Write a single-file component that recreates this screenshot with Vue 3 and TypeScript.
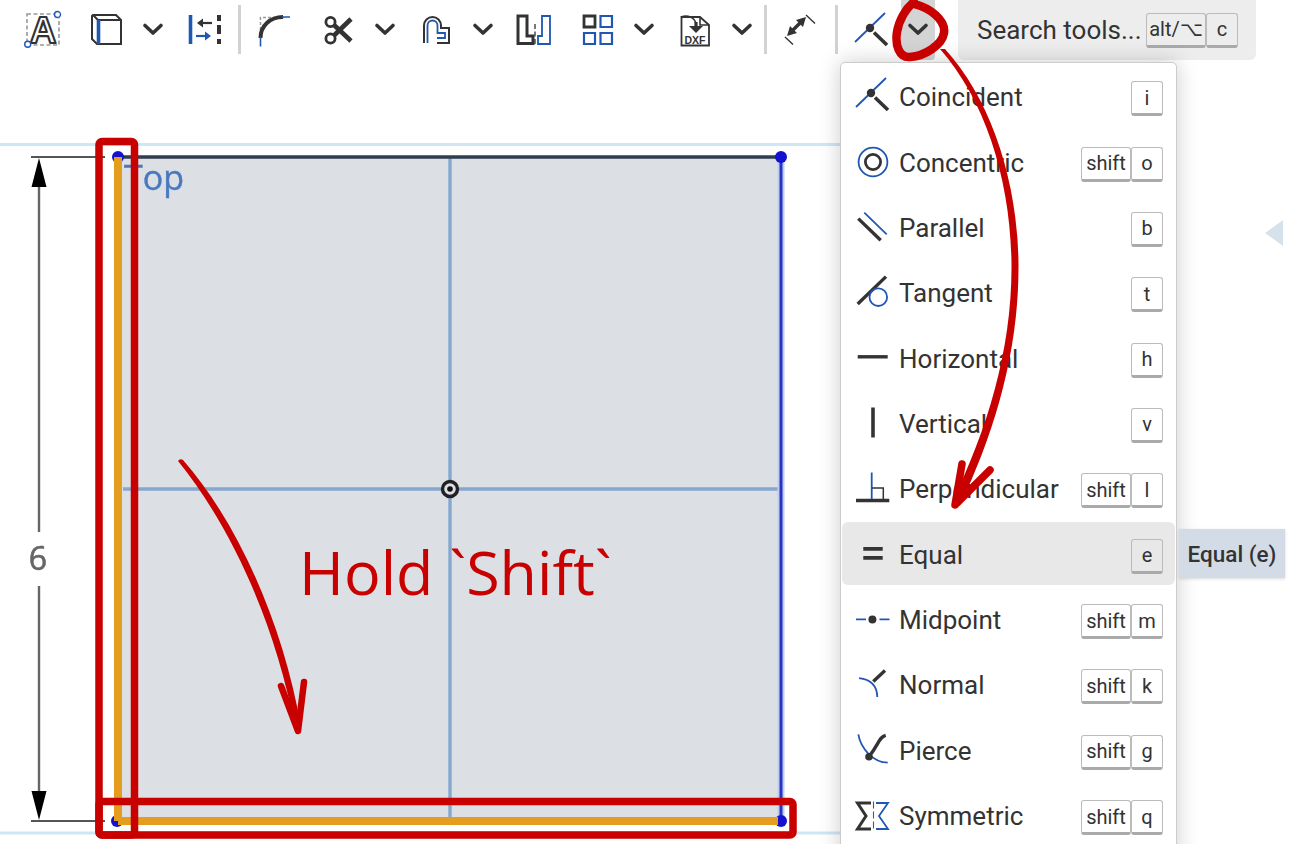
<script setup lang="ts">
// Sketch toolbar with the constraint menu opened over the canvas

interface Shape {
  d?: string
  c?: string
  w?: number
  fill?: string
  dash?: string
  text?: string
  x?: number
  y?: number
  size?: number
}

interface Tool {
  kind: 'icon' | 'chev' | 'sep'
  width?: number
  gap?: number
  active?: boolean
  box?: string
  shapes?: Shape[]
}

interface MenuItem {
  label: string
  keys: string[]
  hover?: boolean
  shapes: Shape[]
}

const DARK = '#333'
const BLUE = '#1f57b3'

const ring = (cx: number, cy: number, r: number) =>
  `M${cx - r} ${cy}a${r} ${r} 0 1 0 ${r * 2} 0a${r} ${r} 0 1 0 ${-r * 2} 0z`

const coincident = (ox: number, oy: number): Shape[] => [
  { d: `M${ox - 17} ${oy + 11}L${ox + 13} ${oy - 18}`, c: BLUE, w: 1.8 },
  { d: `M${ox + 2} ${oy + 1.5}L${ox + 15} ${oy + 14}`, c: DARK, w: 3.6 },
  { d: ring(ox - 2, oy - 3, 4.2), fill: DARK }
]

const tools: Tool[] = [
  {
    kind: 'icon', width: 64, box: '19 6 48 48',
    shapes: [
      { d: 'M27 14H59V45H27z', c: '#999', w: 1.6, dash: '4 2.5' },
      { text: 'A', x: 43, y: 42.5, size: 37, c: DARK, w: 2.2, fill: '#fff' },
      { d: ring(57.5, 14.5, 3), c: BLUE, w: 1.4, fill: '#fff' },
      { d: ring(27.7, 44.3, 3), c: BLUE, w: 1.4, fill: '#fff' }
    ]
  },
  {
    kind: 'icon', width: 64, box: '83 6 48 48',
    shapes: [
      { d: 'M93 15H116L121 20V44H97L92 39V16z', c: DARK, w: 2 },
      { d: 'M98 20H121M93 15L98 20', c: DARK, w: 2 },
      { d: 'M98.5 20V44', c: BLUE, w: 3.6 }
    ]
  },
  { kind: 'chev', width: 28 },
  {
    kind: 'icon', width: 68, gap: 3, box: '180 6 48 48',
    shapes: [
      { d: 'M190.5 15V44', c: BLUE, w: 3.6 },
      { d: 'M200 23H212', c: DARK, w: 2.2 },
      { d: 'M197 23l6-4.5v9z', fill: DARK },
      { d: 'M196 36H208', c: BLUE, w: 2.2 },
      { d: 'M211 36l-6-4.5v9z', fill: BLUE },
      { d: 'M217 15h4v6h-4zM217 25h4v9h-4zM217 39h4v5h-4z', fill: DARK }
    ]
  },
  { kind: 'sep' },
  {
    kind: 'icon', width: 68, box: '251 6 48 48',
    shapes: [
      { d: 'M260.5 30V17.5H284', c: '#999', w: 1.5, dash: '3 2' },
      { d: 'M260.5 38C260.5 26 270 17 283 17', c: DARK, w: 4 },
      { d: 'M260.5 37V46.5M282 17H290', c: BLUE, w: 1.6 }
    ]
  },
  {
    kind: 'icon', width: 58, box: '314 6 48 48',
    shapes: [
      { d: ring(330.5, 22, 4.6), c: DARK, w: 2.8 },
      { d: ring(330.5, 38.5, 4.6), c: DARK, w: 2.8 },
      { d: 'M334 25L351 41', c: DARK, w: 4.6 },
      { d: 'M334 35.5L351 19', c: DARK, w: 4.6 }
    ]
  },
  { kind: 'chev', width: 36 },
  {
    kind: 'icon', width: 64, box: '411 6 48 48',
    shapes: [
      { d: 'M424 43V25.5a8.5 8.5 0 0 1 17 0V28H449V43H437', c: DARK, w: 2 },
      { d: 'M427.5 43V25.5a5 5 0 0 1 10 0V33H445V38H437', c: BLUE, w: 1.8 }
    ]
  },
  { kind: 'chev', width: 32 },
  {
    kind: 'icon', width: 70, box: '510 6 48 48',
    shapes: [
      { d: 'M518 16H527V36H533V43.5H518z', c: DARK, w: 3 },
      { d: 'M550 16H542V36H538V44H550z', c: BLUE, w: 1.8 },
      { d: 'M535 24V44', c: DARK, w: 1.3, dash: '5 2.5' }
    ]
  },
  {
    kind: 'icon', width: 56, box: '573 6 48 48',
    shapes: [
      { d: 'M584 16H595V27H584z', c: DARK, w: 2.8 },
      { d: 'M600.5 16H612V27H600.5zM584 33H595V44H584zM600.5 33H612V44H600.5z', c: BLUE, w: 2.2 }
    ]
  },
  { kind: 'chev', width: 38 },
  {
    kind: 'icon', width: 62, box: '670 6 48 48',
    shapes: [
      { d: 'M681.5 17H700L709 25V45.5H681.5z', c: DARK, w: 1.8 },
      { d: 'M700 17V25H709', c: DARK, w: 1.6 },
      { d: 'M681 17C688 14 695 18 696 24', c: DARK, w: 1.6, fill: 'none' },
      { d: 'M696 22V27', c: DARK, w: 3.2 },
      { d: 'M689 26H703L696 33z', fill: DARK },
      { text: 'DXF', x: 695, y: 43.5, size: 10.5, fill: DARK }
    ]
  },
  { kind: 'chev', width: 34 },
  { kind: 'sep', gap: 5 },
  {
    kind: 'icon', width: 66, box: '776 6 48 48',
    shapes: [
      { d: 'M791 32L802 21', c: DARK, w: 3.4 },
      { d: 'M787 36l3-10 7 7zM806 17l-10 3 7 7z', fill: DARK },
      { d: 'M785 37L793 44.5M806 15L815 23.5', c: DARK, w: 1.4 }
    ]
  },
  { kind: 'sep', gap: 2 },
  { kind: 'icon', width: 63, box: '846 6 48 48', shapes: coincident(872, 31) },
  { kind: 'chev', width: 34, active: true }
]

const menu: MenuItem[] = [
  { label: 'Coincident', keys: ['i'], shapes: coincident(0, -1) },
  {
    label: 'Concentric', keys: ['shift', 'o'],
    shapes: [
      { d: ring(0, 0, 14.4), c: BLUE, w: 1.8 },
      { d: ring(0, 0, 7.6), c: DARK, w: 2.8 }
    ]
  },
  {
    label: 'Parallel', keys: ['b'],
    shapes: [
      { d: 'M-14.7 -8.4L7.7 13.3', c: DARK, w: 3.4 },
      { d: 'M-8.7 -14.4L13.7 7.3', c: BLUE, w: 1.8 }
    ]
  },
  {
    label: 'Tangent', keys: ['t'],
    shapes: [
      { d: 'M-15.3 11L13 -16.4', c: DARK, w: 3.4 },
      { d: ring(5.3, 4.2, 8.8), c: BLUE, w: 1.8 }
    ]
  },
  { label: 'Horizontal', keys: ['h'], shapes: [{ d: 'M-15.3 -1.2H14.7', c: DARK, w: 3.4 }] },
  { label: 'Vertical', keys: ['v'], shapes: [{ d: 'M0 -15.5V14.5', c: DARK, w: 3.6 }] },
  {
    label: 'Perpendicular', keys: ['shift', 'l'],
    shapes: [
      { d: 'M-17 11.5H16.3', c: DARK, w: 3.4 },
      { d: 'M-1.3 -16.5V10', c: BLUE, w: 1.8 },
      { d: 'M-1.3 -0.9H10.3V10', c: DARK, w: 1.5 }
    ]
  },
  {
    label: 'Equal', keys: ['e'], hover: true,
    shapes: [{ d: 'M-9.7 -5.2H9.7M-9.7 3.8H9.7', c: DARK, w: 3.8 }]
  },
  {
    label: 'Midpoint', keys: ['shift', 'm'],
    shapes: [
      { d: 'M-17 -0.6H-7M6.5 -0.6H16.5', c: BLUE, w: 1.8 },
      { d: ring(-0.6, -0.6, 4), fill: DARK }
    ]
  },
  {
    label: 'Normal', keys: ['shift', 'k'],
    shapes: [
      { d: 'M12 -14.5L0.3 -3.5', c: DARK, w: 3.4 },
      { d: 'M-14 -6.9Q4 -5 4.3 12.1', c: BLUE, w: 1.8 }
    ]
  },
  {
    label: 'Pierce', keys: ['shift', 'g'],
    shapes: [
      { d: 'M-14.7 -15.6C-12 -1 0 12 14.7 12.7', c: BLUE, w: 1.8 },
      { d: 'M12.7 -14.6C6 -13 6 -6 -3.7 6.1', c: DARK, w: 3.4 },
      { d: ring(-4, 6.7, 3.8), fill: DARK }
    ]
  },
  {
    label: 'Symmetric', keys: ['shift', 'q'],
    shapes: [
      { d: 'M-2 -13H-15.5L-7 0L-15.5 13H-2', c: DARK, w: 3 },
      { d: 'M3 -13H15L6 0L15 13H3', c: BLUE, w: 1.8 },
      { d: 'M0.5 -14.5V14.5', c: '#555', w: 1.1, dash: '7 3' }
    ]
  }
]
</script>

<template>
  <div class="page">
    <!-- sketch canvas -->
    <svg class="layer" width="1291" height="844" viewBox="0 0 1291 844">
      <g class="soft">
        <path d="M0 144.5H840M0 833H840" stroke="#cfe6f5" stroke-width="3" fill="none" />
        <rect x="118" y="157" width="663" height="664" fill="#dcdfe4" />
        <path d="M450 157V821M123 489H781" stroke="#86a8d0" stroke-width="3.4" fill="none" />
        <path d="M118 157H781" stroke="#2e3d50" stroke-width="3.4" fill="none" />
        <path d="M781 157V821" stroke="#c3cdf0" stroke-width="7" fill="none" />
        <path d="M781 157V821" stroke="#2436c4" stroke-width="3" fill="none" />
        <circle cx="118" cy="157" r="6" fill="#1212d0" />
        <circle cx="781" cy="157" r="6" fill="#1212d0" />
        <circle cx="781" cy="821" r="6" fill="#1212d0" />
        <circle cx="117" cy="821" r="6" fill="#1212d0" />
        <path d="M118 157V821M118 821H778" stroke="#e59d1f" stroke-width="8" fill="none" />
        <circle cx="450" cy="489" r="7.5" fill="#dcdfe4" stroke="#222" stroke-width="3.4" />
        <circle cx="450" cy="489" r="2.8" fill="#111" />
        <path d="M31 157H105M31 821H105" stroke="#555" stroke-width="2" fill="none" />
        <path d="M39 187V532M39 586V792" stroke="#666" stroke-width="2.4" fill="none" />
        <path d="M39 158L46.5 187H31.5zM39 820L46.5 791H31.5z" fill="#000" />
        <text x="38" y="570" class="dim-text">6</text>
        <text x="124" y="190" class="top-text">Top</text>
      </g>
      <path d="M1283 220V246L1265 233z" fill="#d5e2ec" />
    </svg>

    <!-- toolbar -->
    <div class="toolbar">
      <template v-for="(tool, i) in tools" :key="i">
        <div v-if="tool.kind === 'sep'" class="sep" :style="{ marginLeft: `${tool.gap ?? 0}px` }"></div>
        <div
          v-else-if="tool.kind === 'chev'"
          :class="['chev', { active: tool.active }]"
          :style="{ width: `${tool.width}px` }"
        >
          <svg width="24" height="16" viewBox="0 0 24 16">
            <path d="M4 3.5l8 7.5 8-7.5" fill="none" stroke="#333" stroke-width="3.6" stroke-linecap="round" stroke-linejoin="round" />
          </svg>
        </div>
        <div v-else class="tool" :style="{ width: `${tool.width}px`, marginLeft: `${tool.gap ?? 0}px` }">
          <svg width="48" height="48" :viewBox="tool.box">
            <template v-for="(s, j) in tool.shapes" :key="j">
              <text
                v-if="s.text"
                :x="s.x"
                :y="s.y"
                :font-size="s.size"
                :fill="s.fill"
                :stroke="s.c"
                :stroke-width="s.w"
                class="icon-text"
              >{{ s.text }}</text>
              <path
                v-else
                :d="s.d"
                :fill="s.fill ?? 'none'"
                :stroke="s.c ?? 'none'"
                :stroke-width="s.w"
                :stroke-dasharray="s.dash"
              />
            </template>
          </svg>
        </div>
      </template>

      <div class="search">
        <span class="search-label">Search tools...</span>
        <span class="keys">
          <kbd class="key key-alt">alt/⌥</kbd>
          <kbd class="key key-c">c</kbd>
        </span>
      </div>
    </div>

    <!-- constraint menu -->
    <div class="menu">
      <div v-for="item in menu" :key="item.label" :class="['row', { hover: item.hover }]">
        <svg class="row-icon" width="48" height="48" viewBox="-24 -23 48 48">
          <path
            v-for="(s, j) in item.shapes"
            :key="j"
            :d="s.d"
            :fill="s.fill ?? 'none'"
            :stroke="s.c ?? 'none'"
            :stroke-width="s.w"
            :stroke-dasharray="s.dash"
          />
        </svg>
        <span class="row-label">{{ item.label }}</span>
        <span class="keys row-keys">
          <kbd v-for="k in item.keys" :key="k" :class="['key', k === 'shift' ? 'key-shift' : 'key-one']">{{ k }}</kbd>
        </span>
      </div>
    </div>

    <div class="tooltip">Equal (e)</div>

    <!-- hand-drawn notes on top of everything -->
    <svg class="layer notes" width="1291" height="844" viewBox="0 0 1291 844">
      <g fill="none" stroke="#c90000" stroke-linecap="round" stroke-linejoin="round">
        <rect x="99" y="141.5" width="35.5" height="693.5" rx="3" stroke-width="7.5" />
        <rect x="99" y="801.5" width="694" height="33.5" rx="3" stroke-width="7.5" />
        <path d="M914 4C930 8 946 20 944 33C942 45 925 56 910 57C899 58 895 45 897 32C899 20 906 8 914 2" stroke-width="8.5" />
        <path d="M962 464L955 505L990 470" stroke-width="7.5" />
        <path d="M281 686L298 731L304 682" stroke-width="6.5" />
      </g>
      <path
        class="stroke-fill"
        d="M940 49C985 100 1011 180 1011.5 265C1012 350 987 430 952 502L960 505C995 432 1019 350 1018.5 265C1018 180 990 98 945 49Z"
      />
      <path class="stroke-fill" d="M178 461C234 530 277 630 295 728L301 727C284 628 240 525 183 460Q180 458 178 461Z" />
      <text x="299" y="595" class="hold-text">Hold `Shift`</text>
    </svg>
  </div>
</template>

<style>
html,
body {
  margin: 0;
  background: #fff;
}
</style>

<style scoped>
.page {
  position: relative;
  width: 1291px;
  height: 844px;
  overflow: hidden;
  background: #fff;
  font-family: Roboto, "Noto Sans", "DejaVu Sans", sans-serif;
  color: #333;
}

.layer {
  position: absolute;
  inset: 0;
}

.notes {
  pointer-events: none;
}

.stroke-fill {
  fill: #c90000;
}

.soft {
  filter: blur(0.5px);
}

.dim-text {
  font-family: "Open Sans", sans-serif;
  font-size: 32px;
  fill: #666;
  stroke: #666;
  stroke-width: 0.6px;
  text-anchor: middle;
}

.top-text {
  font-family: "Open Sans", sans-serif;
  font-size: 34px;
  fill: #4a78c0;
  stroke: #4a78c0;
  stroke-width: 0.4px;
}

.hold-text {
  font-family: "Open Sans", sans-serif;
  font-size: 61px;
  fill: #c90000;
}

.icon-text {
  font-family: "Liberation Sans", sans-serif;
  font-weight: 700;
  stroke-linejoin: round;
  text-anchor: middle;
}

.toolbar {
  position: relative;
  display: flex;
  align-items: flex-start;
  height: 60px;
  padding-left: 11px;
}

.tool,
.chev {
  display: flex;
  flex-shrink: 0;
  align-items: center;
  justify-content: center;
  height: 60px;
}

.chev.active {
  background: #d4d4d4;
  border-radius: 0 0 4px 4px;
}

.sep {
  flex-shrink: 0;
  width: 3px;
  height: 49px;
  margin-top: 5px;
  background: #d2d2d2;
}

.search {
  display: flex;
  flex-shrink: 0;
  align-items: center;
  box-sizing: border-box;
  width: 298px;
  height: 60px;
  margin-left: 23px;
  padding-left: 19px;
  background: #ededed;
  border-radius: 0 0 6px 6px;
}

.search-label {
  width: 169px;
  font-size: 26px;
  white-space: nowrap;
}

.keys {
  display: flex;
}

.row-keys {
  margin-top: 2px;
}

.key {
  display: flex;
  align-items: center;
  justify-content: center;
  box-sizing: border-box;
  height: 35px;
  border: 1px solid #bbb;
  border-bottom: 3px solid #aaa;
  border-radius: 3px;
  font-family: inherit;
  font-size: 20px;
  color: #333;
}

.key-alt {
  width: 60px;
}

.key-c,
.key-one {
  width: 32px;
}

.key-shift {
  width: 50px;
}

.menu {
  position: absolute;
  top: 62px;
  left: 840px;
  box-sizing: border-box;
  width: 337px;
  height: 800px;
  padding: 1.5px 1px 0;
  background: #fff;
  border: 1px solid #ccc;
  border-radius: 5px;
  box-shadow: 0 0 22px rgba(0, 0, 0, 0.2);
}

.row {
  display: flex;
  align-items: center;
  box-sizing: border-box;
  height: 63.36px;
  margin-bottom: 2px;
  padding: 3px 12px 0 7px;
  border-radius: 6px;
}

.row.hover {
  background: #e8e8e8;
}

.row-icon {
  flex-shrink: 0;
}

.row-label {
  flex: 1;
  margin-left: 2px;
  padding-bottom: 1px;
  font-size: 26px;
  white-space: nowrap;
}

.tooltip {
  position: absolute;
  top: 529px;
  left: 1179px;
  display: flex;
  align-items: center;
  justify-content: center;
  width: 106px;
  height: 49px;
  background: #d3dce6;
  box-shadow: 0 1px 3px rgba(0, 0, 0, 0.15);
  font-size: 22.5px;
  font-weight: 500;
}
</style>
